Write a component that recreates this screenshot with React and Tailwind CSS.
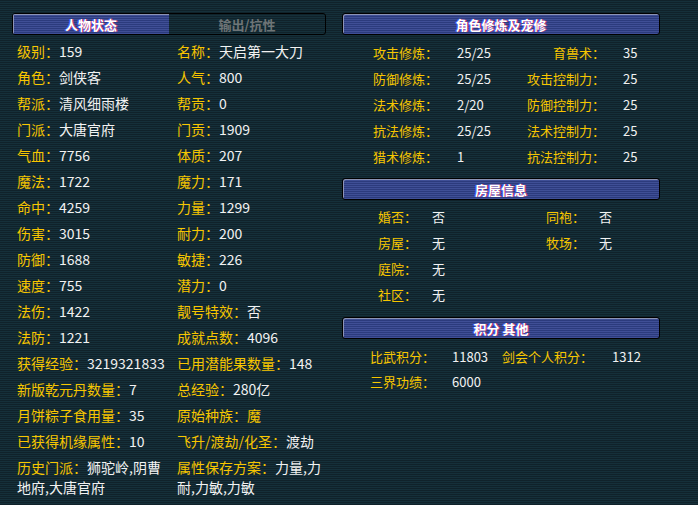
import React from 'react';

const font = { fontFamily: '"Noto Sans CJK SC", "Liberation Sans", sans-serif' };

const leftRows = [
  ['级别', '159', '名称', '天启第一大刀'],
  ['角色', '剑侠客', '人气', '800'],
  ['帮派', '清风细雨楼', '帮贡', '0'],
  ['门派', '大唐官府', '门贡', '1909'],
  ['气血', '7756', '体质', '207'],
  ['魔法', '1722', '魔力', '171'],
  ['命中', '4259', '力量', '1299'],
  ['伤害', '3015', '耐力', '200'],
  ['防御', '1688', '敏捷', '226'],
  ['速度', '755', '潜力', '0'],
  ['法伤', '1422', '靓号特效', '否'],
  ['法防', '1221', '成就点数', '4096'],
  ['获得经验', '3219321833', '已用潜能果数量', '148'],
  ['新版乾元丹数量', '7', '总经验', '280亿'],
  ['月饼粽子食用量', '35', '原始种族', '魔', true],
  ['已获得机缘属性', '10', '飞升/渡劫/化圣', '渡劫'],
];

const cultivation = [
  ['攻击修炼', '25/25', '育兽术', '35'],
  ['防御修炼', '25/25', '攻击控制力', '25'],
  ['法术修炼', '2/20', '防御控制力', '25'],
  ['抗法修炼', '25/25', '法术控制力', '25'],
  ['猎术修炼', '1', '抗法控制力', '25'],
];

const house = [
  ['婚否', '否', '同袍', '否'],
  ['房屋', '无', '牧场', '无'],
  ['庭院', '无'],
  ['社区', '无'],
];

const stripes =
  'bg-[repeating-linear-gradient(180deg,#2c3b7d_0px,#2c3b7d_1px,#3f4f96_1px,#3f4f96_2px)]';

function Label({ children, className = '' }) {
  return <span className={`text-[#f7c600] ${className}`}>{children}：</span>;
}

function SectionHeader({ title }) {
  return (
    <div
      className={`h-[22px] rounded-[3px] border border-black ${stripes} shadow-[inset_1px_1px_0_#8c93b4] flex items-center justify-center text-white text-[13px] font-bold [text-shadow:1px_0_0_#c0306a,-1px_0_0_#4060ff]`}
    >
      {title}
    </div>
  );
}

export default function App() {
  return (
    <div
      style={font}
      className="w-[698px] h-[505px] overflow-hidden bg-[repeating-linear-gradient(180deg,#10222a_0px,#10222a_1px,#15303a_1px,#15303a_2px)] text-[14px] leading-none text-[#f2f2f2] flex gap-[16px] pl-[12px] pt-[13px]"
    >
      {/* 人物状态 */}
      <div className="w-[314px] flex flex-col">
        <div className="h-[22px] rounded-[3px] border border-black flex text-[13px] font-bold overflow-hidden">
          <div
            className={`w-[156px] ${stripes} shadow-[inset_1px_1px_0_#8c93b4] flex items-center justify-center text-white [text-shadow:1px_0_0_#c0306a,-1px_0_0_#4060ff]`}
          >
            人物状态
          </div>
          <div className="flex-1 flex items-center justify-center text-[#6e7476]">输出/抗性</div>
        </div>
        <div className="mt-[3px] pl-[5px] grid grid-cols-[160px_160px]">
          {leftRows.map(([l1, v1, l2, v2, hot]) => (
            <React.Fragment key={l1}>
              <div className="h-[26px] flex items-center whitespace-nowrap">
                <Label>{l1}</Label>
                <span>{v1}</span>
              </div>
              <div className="h-[26px] flex items-center whitespace-nowrap">
                <Label>{l2}</Label>
                <span className={hot ? 'text-[#f7c600]' : ''}>{v2}</span>
              </div>
            </React.Fragment>
          ))}
          <div className="pt-[3px] leading-[20px]">
            <Label>历史门派</Label>狮驼岭,阴曹
            <br />
            地府,大唐官府
          </div>
          <div className="pt-[3px] leading-[20px]">
            <Label>属性保存方案</Label>力量,力
            <br />
            耐,力敏,力敏
          </div>
        </div>
      </div>

      {/* 右侧 */}
      <div className="w-[318px] flex flex-col text-[13px]">
        <SectionHeader title="角色修炼及宠修" />
        <div className="mt-[4px] pl-[31px] grid grid-cols-[84px_70px_78px_auto]">
          {cultivation.map(([l1, v1, l2, v2]) => (
            <React.Fragment key={l1}>
              <div className="h-[26px] flex items-center whitespace-nowrap">
                <Label>{l1}</Label>
              </div>
              <div className="h-[26px] flex items-center">{v1}</div>
              <div className="h-[26px] flex items-center justify-end whitespace-nowrap">
                <Label>{l2}</Label>
              </div>
              <div className="h-[26px] flex items-center pl-[18px]">{v2}</div>
            </React.Fragment>
          ))}
        </div>

        <div className="mt-[9px]">
          <SectionHeader title="房屋信息" />
        </div>
        <div className="mt-[3px] pl-[36px] grid grid-cols-[54px_114px_53px_auto]">
          {house.map(([l1, v1, l2, v2]) => (
            <React.Fragment key={l1}>
              <div className="h-[26px] flex items-center whitespace-nowrap">
                <Label>{l1}</Label>
              </div>
              <div className="h-[26px] flex items-center">{v1}</div>
              <div className="h-[26px] flex items-center whitespace-nowrap">
                {l2 && <Label>{l2}</Label>}
              </div>
              <div className="h-[26px] flex items-center">{v2}</div>
            </React.Fragment>
          ))}
        </div>

        <div className="mt-[10px]">
          <SectionHeader title="积分 其他" />
        </div>
        <div className="mt-[5px] pl-[28px] grid grid-cols-[82px_50px_110px_auto]">
          <div className="h-[25px] flex items-center whitespace-nowrap">
            <Label>比武积分</Label>
          </div>
          <div className="h-[25px] flex items-center">11803</div>
          <div className="h-[25px] flex items-center whitespace-nowrap">
            <Label>剑会个人积分</Label>
          </div>
          <div className="h-[25px] flex items-center">1312</div>
          <div className="h-[25px] flex items-center whitespace-nowrap">
            <Label>三界功绩</Label>
          </div>
          <div className="h-[25px] flex items-center">6000</div>
        </div>
      </div>
    </div>
  );
}
